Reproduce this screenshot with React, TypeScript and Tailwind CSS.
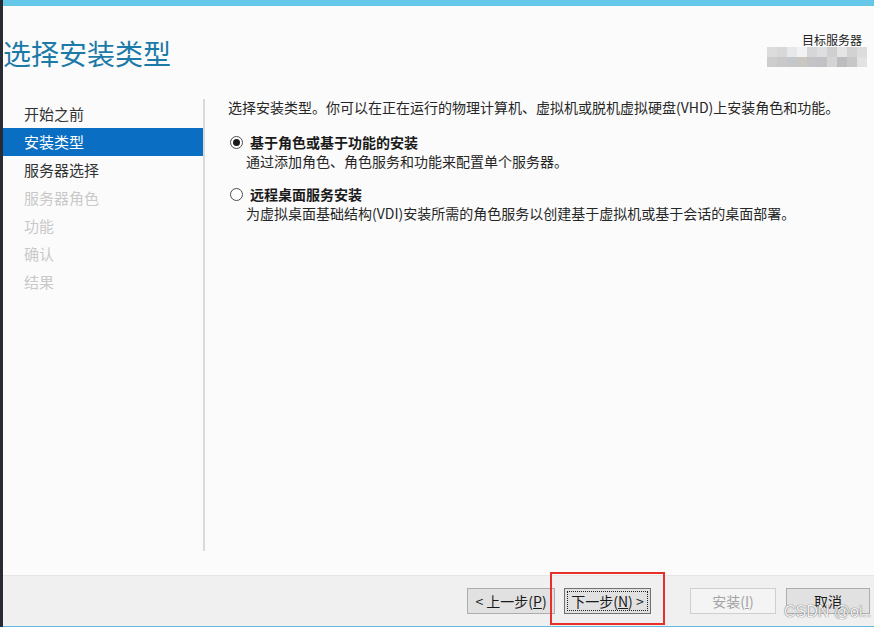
import React from 'react';

const FONT = "font-['Segoe_UI','Noto_Sans_CJK_SC','Noto_Sans',sans-serif]";

const STEPS = [
  { label: '开始之前', state: 'done' },
  { label: '安装类型', state: 'active' },
  { label: '服务器选择', state: 'done' },
  { label: '服务器角色', state: 'off' },
  { label: '功能', state: 'off' },
  { label: '确认', state: 'off' },
  { label: '结果', state: 'off' },
];

// pixelated cells covering the server name
const MOSAIC = [
  '#dcdcdc', '#d8d8d8', '#e6e8ea', '#f2f2f2', '#d6d6d8', '#dedee0', '#cfcfcf', '#e4e4e4', '#d2d2d2', '#dcdcdc',
  '#cdcdcd', '#c9c9c9', '#c4c8ca', '#cac6c2', '#c4c4c6', '#c2c2c6', '#d4d4d4', '#bdbcbe', '#c8c6c6', '#e2e2e2',
];

function Radio({ checked }: { checked: boolean }) {
  return (
    <span className="w-[13px] h-[13px] rounded-full border border-[#4d4d4d] bg-white flex items-center justify-center shrink-0">
      {checked && <span className="w-[7px] h-[7px] rounded-full bg-[#1a1a1a]" />}
    </span>
  );
}

function Option({ checked, title, desc }: { checked: boolean; title: string; desc: string }) {
  return (
    <div className="flex flex-col">
      <div className="flex items-center gap-[7px] pl-[2px]">
        <Radio checked={checked} />
        <span className="text-[14px] font-bold text-[#1a1a1a] leading-[18px]">{title}</span>
      </div>
      <div className="pl-[18px] text-[14px] text-[#262626] leading-[20px]">{desc}</div>
    </div>
  );
}

export default function App() {
  return (
    <div className={`relative w-[874px] h-[627px] flex bg-[#fbfbfb] overflow-hidden ${FONT}`}>
      {/* dark window edge */}
      <div className="w-[3px] h-full bg-[#282b33]" />

      <div className="flex-1 flex flex-col">
        <div className="h-[6px] bg-[#66c8e8]" />

        {/* header */}
        <div className="h-[93px] flex justify-between">
          <h1 className="pt-[29px] text-[28px] leading-[36px] text-[#1c7aa8] font-normal">选择安装类型</h1>
          <div className="pt-[27px] pr-[7px] flex flex-col items-end">
            <div className="text-[12px] leading-[14px] text-[#222] pr-[5px]">目标服务器</div>
            <div className="grid grid-cols-10 w-[100px]">
              {MOSAIC.map((c, i) => (
                <div key={i} className="h-[10px]" style={{ backgroundColor: c }} />
              ))}
            </div>
          </div>
        </div>

        {/* body */}
        <div className="flex-1 flex pb-[24px]">
          <nav className="w-[200px] flex flex-col pt-[1px]">
            {STEPS.map((s) => (
              <div
                key={s.label}
                className={
                  s.state === 'active'
                    ? 'h-[28px] pl-[21px] flex items-center text-[15px] text-white bg-[#0a6fc2]'
                    : s.state === 'done'
                    ? 'h-[28px] pl-[21px] flex items-center text-[15px] text-[#333]'
                    : 'h-[28px] pl-[21px] flex items-center text-[15px] text-[#c9c9c9]'
                }
              >
                {s.label}
              </div>
            ))}
          </nav>
          <div className="w-[2px] bg-[#dadada]" />
          <div className="flex-1 pl-[23px] flex flex-col">
            <p className="text-[14px] leading-[16px] text-[#262626]">
              选择安装类型。你可以在正在运行的物理计算机、虚拟机或脱机虚拟硬盘(VHD)上安装角色和功能。
            </p>
            <div className="mt-[18px] flex flex-col gap-[14px]">
              <Option checked title="基于角色或基于功能的安装" desc="通过添加角色、角色服务和功能来配置单个服务器。" />
              <Option
                checked={false}
                title="远程桌面服务安装"
                desc="为虚拟桌面基础结构(VDI)安装所需的角色服务以创建基于虚拟机或基于会话的桌面部署。"
              />
            </div>
          </div>
        </div>

        {/* footer buttons */}
        <div className="h-[51px] bg-[#f0f0f0] border-t border-[#e6e6e6] flex items-start pt-[12px] pr-[4px] justify-end">
          <button className="w-[88px] h-[26px] border border-[#adadad] bg-[#e1e1e1] text-[14px] text-[#1a1a1a]">
            &lt; 上一步(<span className="underline">P</span>)
          </button>
          <button className="ml-[9px] w-[87px] h-[26px] border border-[#707070] bg-[#e1e1e1] p-[2px]">
            <span className="w-full h-full flex items-center justify-center border border-dotted border-[#222] text-[14px] text-[#1a1a1a]">
              下一步(<span className="underline">N</span>) &gt;
            </span>
          </button>
          <button className="ml-[39px] w-[86px] h-[26px] border border-[#cfcfcf] bg-[#f4f4f4] text-[14px] text-[#a3a3a3]">
            安装(<span className="underline">I</span>)
          </button>
          <button className="ml-[10px] w-[84px] h-[26px] border border-[#adadad] bg-[#e1e1e1] text-[14px] text-[#1a1a1a]">
            取消
          </button>
        </div>
        <div className="h-[1px] bg-[#66b9dd]" />
      </div>

      {/* highlight box around the next button */}
      <div className="absolute left-[550px] top-[572px] w-[115px] h-[53px] border-2 border-[#e8302a]" />

      {/* watermark */}
      <div className="absolute left-[784px] top-[603px] text-[16px] leading-[18px] text-[#f2f2f2] font-['Liberation_Sans',sans-serif] [text-shadow:0_0_1px_#777,0_0_1px_#777]">
        CSDN @oi..
      </div>
    </div>
  );
}
